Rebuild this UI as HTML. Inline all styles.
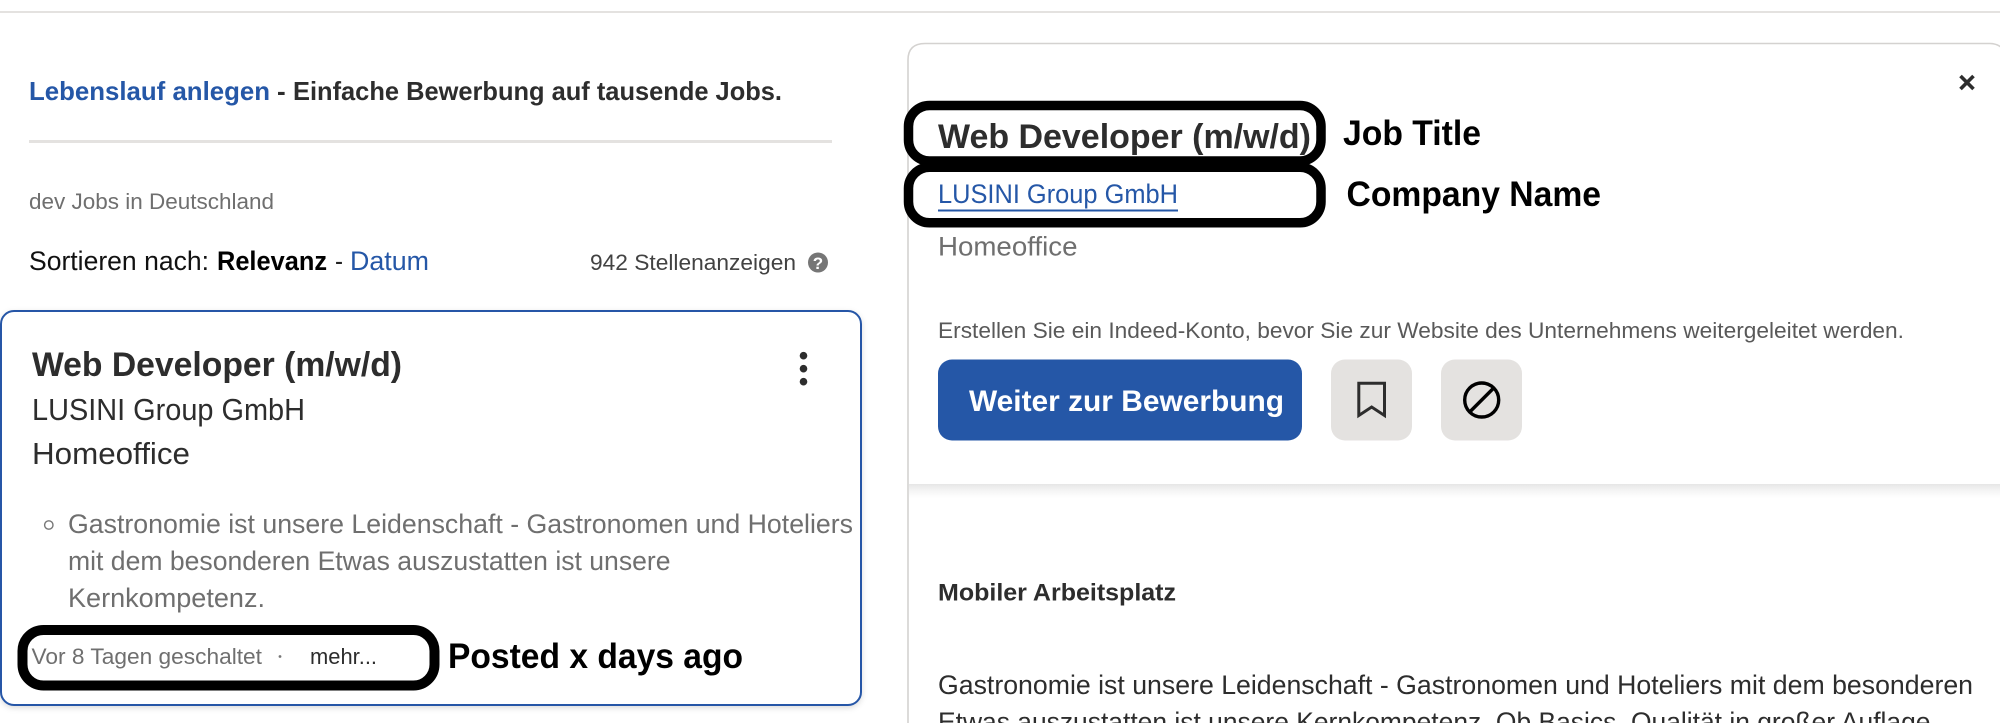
<!DOCTYPE html>
<html lang="de">
<head>
<meta charset="utf-8">
<title>Web Developer (m/w/d)</title>
<style>
html,body{margin:0;padding:0;width:2000px;height:723px;overflow:hidden;background:#fff}
svg{display:block}
text{font-family:"Liberation Sans",Arial,sans-serif;white-space:pre}
.b{font-weight:700}
</style>
</head>
<body>
<svg xmlns="http://www.w3.org/2000/svg" width="2000" height="723" viewBox="0 0 2000 723">
<defs>
<filter id="cs" x="-5%" y="-5%" width="110%" height="115%"><feDropShadow dx="0" dy="2" stdDeviation="3" flood-color="#000" flood-opacity=".14"/></filter>
<linearGradient id="hs" x1="0" y1="0" x2="0" y2="1"><stop offset="0" stop-color="#e6e6e6"/><stop offset=".4" stop-color="#f3f3f3"/><stop offset="1" stop-color="#fff"/></linearGradient>
</defs>

<rect x="0" y="11" width="2000" height="2" fill="#e4e2e0"/>

<text x="29" y="100" font-size="26" class="b" fill="#2557a7" textLength="241" lengthAdjust="spacingAndGlyphs">Lebenslauf anlegen</text>
<text x="277" y="100" font-size="26" class="b" fill="#2d2d2d">-</text>
<text x="293" y="100" font-size="26" class="b" fill="#2d2d2d" textLength="489" lengthAdjust="spacingAndGlyphs">Einfache Bewerbung auf tausende Jobs.</text>
<rect x="29" y="140" width="803" height="3" fill="#e4e2e0"/>

<text x="29" y="209" font-size="22.5" fill="#6f6f6f" textLength="245" lengthAdjust="spacingAndGlyphs">dev Jobs in Deutschland</text>

<text x="29" y="270" font-size="26.5" fill="#111" textLength="180" lengthAdjust="spacingAndGlyphs">Sortieren nach:</text>
<text x="217" y="270" font-size="26.5" class="b" fill="#000" textLength="110" lengthAdjust="spacingAndGlyphs">Relevanz</text>
<text x="335" y="270" font-size="26.5" fill="#222" textLength="8" lengthAdjust="spacingAndGlyphs">-</text>
<text x="350" y="270" font-size="26.5" fill="#2557a7" textLength="79" lengthAdjust="spacingAndGlyphs">Datum</text>
<text x="590" y="270" font-size="22.5" fill="#424242" textLength="206" lengthAdjust="spacingAndGlyphs">942 Stellenanzeigen</text>
<circle cx="818" cy="262.5" r="10" fill="#767676"/>
<text x="818" y="269" font-size="17" class="b" fill="#fff" text-anchor="middle">?</text>

<!-- job card -->
<rect x="1" y="311" width="860" height="394" rx="13" fill="#fff" stroke="#2557a7" stroke-width="2" filter="url(#cs)"/>
<text x="32" y="376" font-size="34.5" class="b" fill="#2d2d2d" textLength="370" lengthAdjust="spacingAndGlyphs">Web Developer (m/w/d)</text>
<circle cx="803.5" cy="355.7" r="3.8" fill="#2d2d2d"/>
<circle cx="803.5" cy="368.7" r="3.8" fill="#2d2d2d"/>
<circle cx="803.5" cy="381.7" r="3.8" fill="#2d2d2d"/>
<text x="32" y="420" font-size="31" fill="#2d2d2d" textLength="273" lengthAdjust="spacingAndGlyphs">LUSINI Group GmbH</text>
<text x="32" y="464" font-size="31" fill="#2d2d2d" textLength="158" lengthAdjust="spacingAndGlyphs">Homeoffice</text>

<circle cx="48.8" cy="525" r="4.2" fill="none" stroke="#767676" stroke-width="1.4"/>
<text x="68" y="533" font-size="27" fill="#6f6f6f" textLength="785" lengthAdjust="spacingAndGlyphs">Gastronomie ist unsere Leidenschaft - Gastronomen und Hoteliers</text>
<text x="68" y="570" font-size="27" fill="#6f6f6f" textLength="602.5" lengthAdjust="spacingAndGlyphs">mit dem besonderen Etwas auszustatten ist unsere</text>
<text x="68" y="607" font-size="27" fill="#6f6f6f" textLength="197" lengthAdjust="spacingAndGlyphs">Kernkompetenz.</text>

<text x="31.5" y="664" font-size="22.5" fill="#6f6f6f" textLength="230.5" lengthAdjust="spacingAndGlyphs">Vor 8 Tagen geschaltet</text>
<circle cx="280" cy="656.5" r="1.4" fill="#767676"/>
<text x="310" y="664" font-size="22.5" fill="#2d2d2d" textLength="67" lengthAdjust="spacingAndGlyphs">mehr...</text>
<rect x="22.5" y="630" width="412" height="55.5" rx="21" fill="none" stroke="#000" stroke-width="10"/>
<text x="448" y="668" font-size="35" class="b" fill="#000" textLength="295" lengthAdjust="spacingAndGlyphs">Posted x days ago</text>

<!-- right panel -->
<path d="M908 723V60Q908 43.5 925 43.5H1990Q1997 43.5 2002 48" fill="none" stroke="#d4d2d0" stroke-width="1.6"/>
<rect x="909" y="484" width="1091" height="14" fill="url(#hs)"/>

<path d="M1960.5 76L1973.5 89M1973.5 76L1960.5 89" stroke="#2d2d2d" stroke-width="3.6" fill="none"/>

<text x="938" y="148" font-size="34.5" class="b" fill="#2d2d2d" textLength="373" lengthAdjust="spacingAndGlyphs">Web Developer (m/w/d)</text>
<rect x="908.5" y="105.5" width="412.5" height="55.5" rx="21" fill="none" stroke="#000" stroke-width="9.5"/>
<text x="938" y="203" font-size="26.5" fill="#2557a7" textLength="240" lengthAdjust="spacingAndGlyphs">LUSINI Group GmbH</text>
<rect x="938" y="209.5" width="240" height="2" fill="#2557a7"/>
<rect x="908.5" y="167.3" width="412.5" height="55.5" rx="21" fill="none" stroke="#000" stroke-width="9.5"/>
<text x="1343" y="145" font-size="35" class="b" fill="#000" textLength="138" lengthAdjust="spacingAndGlyphs">Job Title</text>
<text x="1346.5" y="206" font-size="35" class="b" fill="#000" textLength="254.5" lengthAdjust="spacingAndGlyphs">Company Name</text>
<text x="938" y="255.5" font-size="26.5" fill="#6f6f6f" textLength="139.5" lengthAdjust="spacingAndGlyphs">Homeoffice</text>
<text x="938" y="338" font-size="22.5" fill="#595959" textLength="966" lengthAdjust="spacingAndGlyphs">Erstellen Sie ein Indeed-Konto, bevor Sie zur Website des Unternehmens weitergeleitet werden.</text>

<rect x="938" y="359.5" width="364" height="81" rx="14" fill="#2557a7"/>
<text x="969" y="411" font-size="30" class="b" fill="#fff" textLength="315" lengthAdjust="spacingAndGlyphs">Weiter zur Bewerbung</text>

<rect x="1331" y="359.5" width="81" height="81" rx="14" fill="#e4e2e0"/>
<path d="M1358.8 383.2H1384.5V415.5L1371.65 407L1358.8 415.5Z" fill="none" stroke="#2d2d2d" stroke-width="3"/>

<rect x="1441" y="359.5" width="81" height="81" rx="14" fill="#e4e2e0"/>
<circle cx="1481.7" cy="400" r="17" fill="none" stroke="#000" stroke-width="3.4"/>
<path d="M1469.7 412L1493.7 388" stroke="#000" stroke-width="3.4" fill="none"/>

<text x="938" y="600.5" font-size="24.5" class="b" fill="#2d2d2d" textLength="238" lengthAdjust="spacingAndGlyphs">Mobiler Arbeitsplatz</text>
<text x="938" y="694" font-size="27" fill="#2d2d2d" textLength="1035" lengthAdjust="spacingAndGlyphs">Gastronomie ist unsere Leidenschaft - Gastronomen und Hoteliers mit dem besonderen</text>
<text x="938" y="731" font-size="27" fill="#2d2d2d" textLength="992.5" lengthAdjust="spacingAndGlyphs">Etwas auszustatten ist unsere Kernkompetenz. Ob Basics, Qualität in großer Auflage</text>
</svg>
</body>
</html>
